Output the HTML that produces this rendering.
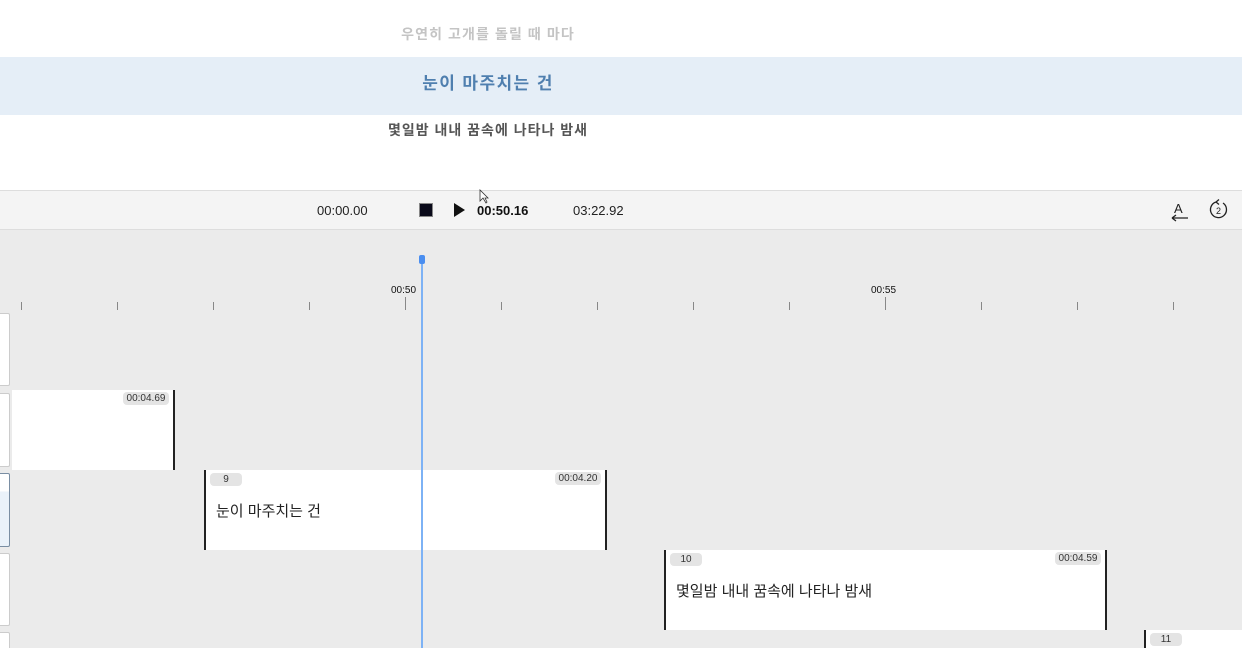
<!DOCTYPE html>
<html><head><meta charset="utf-8"><style>
*{margin:0;padding:0;box-sizing:border-box}
html,body{width:1242px;height:648px;overflow:hidden}
body{background:#ebebeb;font-family:"Liberation Sans","Noto Sans CJK KR",sans-serif;position:relative}
.abs{position:absolute}
.lyr{position:absolute;left:-133px;width:1242px;text-align:center;font-weight:bold;font-family:"Liberation Sans","Noto Sans CJK KR",sans-serif}
.tick{position:absolute;width:1px;background:#888;top:302px;height:8px}
.clip{position:absolute;background:#fff;height:80px}
.lb{position:absolute;top:0;bottom:0;width:2px;background:#222;left:0}
.rb{position:absolute;top:0;bottom:0;width:2px;background:#222;right:0}
.tag{position:absolute;background:#e4e4e4;border-radius:4px;font-size:10px;color:#333;height:13px;line-height:13px;text-align:center}
.txt{position:absolute;left:12px;top:30px;font-size:15px;color:#222}
.side{position:absolute;left:-2px;width:12px;background:#fff;border:1px solid #ccc;border-radius:2px}
</style></head><body>
<div class="abs" style="left:0;top:0;width:1242px;height:190px;background:#fff"></div>
<div class="abs" style="left:0;top:57px;width:1242px;height:58px;background:#e5eef7"></div>
<div class="lyr" style="top:24px;font-size:14px;color:#c4c4c4;letter-spacing:1.1px">우연히 고개를 돌릴 때 마다</div>
<div class="lyr" style="top:69px;font-size:17px;color:#4f7faf;letter-spacing:1.4px">눈이 마주치는 건</div>
<div class="lyr" style="top:120px;font-size:14px;color:#555;letter-spacing:1px">몇일밤 내내 꿈속에 나타나 밤새</div>
<div class="abs" style="left:0;top:190px;width:1242px;height:40px;background:#f4f4f4;border-top:1px solid #ddd;border-bottom:1px solid #ddd"></div>
<div class="abs" style="left:317px;top:203px;font-size:13px;color:#222">00:00.00</div>
<div class="abs" style="left:419px;top:203px;width:14px;height:14px;background:#0a0a1a;border:1px solid #888"></div>
<svg class="abs" style="left:452px;top:202px" width="14" height="16"><path d="M2 1 L13 8 L2 15 Z" fill="#111"/></svg>
<div class="abs" style="left:477px;top:203px;font-size:13px;color:#111;font-weight:bold">00:50.16</div>
<div class="abs" style="left:573px;top:203px;font-size:13px;color:#222">03:22.92</div>
<svg class="abs" style="left:1168px;top:198px" width="24" height="24"><text x="6" y="15" font-size="13" font-family="Liberation Sans" fill="#222">A</text><path d="M4 20 H20 M4 20 L8 17 M4 20 L8 23" stroke="#222" stroke-width="1.3" fill="none"/></svg>
<svg class="abs" style="left:1207px;top:198px" width="24" height="24"><path d="M9 4 A8 8 0 1 0 16 5" stroke="#222" stroke-width="1.3" fill="none"/><path d="M9 4 L12 1.5 M9 4 L12 6.5" stroke="#222" stroke-width="1.3" fill="none"/><text x="9" y="16" font-size="9" font-family="Liberation Sans" fill="#222">2</text></svg>
<div class="abs" style="left:391px;top:285px;font-size:10px;color:#111">00:50</div>
<div class="abs" style="left:871px;top:285px;font-size:10px;color:#111">00:55</div>
<div class="tick" style="left:21px"></div><div class="tick" style="left:117px"></div><div class="tick" style="left:213px"></div><div class="tick" style="left:309px"></div><div class="tick" style="left:405px;top:297px;height:13px"></div><div class="tick" style="left:501px"></div><div class="tick" style="left:597px"></div><div class="tick" style="left:693px"></div><div class="tick" style="left:789px"></div><div class="tick" style="left:885px;top:297px;height:13px"></div><div class="tick" style="left:981px"></div><div class="tick" style="left:1077px"></div><div class="tick" style="left:1173px"></div>
<div class="side" style="top:313px;height:73px"></div>
<div class="side" style="top:393px;height:74px"></div>
<div class="side" style="top:473px;height:74px;border-color:#7a8ea3;background:linear-gradient(#fff 0,#fff 24%,#eaf2fa 24%)"></div>
<div class="side" style="top:553px;height:73px"></div>
<div class="side" style="top:632px;height:20px"></div>
<div class="clip" style="left:12px;top:390px;width:163px"><div class="rb"></div><div class="tag" style="right:6px;top:2px;width:46px">00:04.69</div></div>
<div class="clip" style="left:204px;top:470px;width:403px"><div class="lb"></div><div class="rb"></div><div class="tag" style="left:6px;top:3px;width:32px">9</div><div class="tag" style="right:6px;top:2px;width:46px">00:04.20</div><div class="txt">눈이 마주치는 건</div></div>
<div class="clip" style="left:664px;top:550px;width:443px"><div class="lb"></div><div class="rb"></div><div class="tag" style="left:6px;top:3px;width:32px">10</div><div class="tag" style="right:6px;top:2px;width:46px">00:04.59</div><div class="txt">몇일밤 내내 꿈속에 나타나 밤새</div></div>
<div class="clip" style="left:1144px;top:630px;width:98px;height:18px"><div class="lb"></div><div class="tag" style="left:6px;top:3px;width:32px">11</div></div>
<div class="abs" style="left:421px;top:258px;width:2px;height:390px;background:#7db2f5"></div>
<div class="abs" style="left:419px;top:255px;width:6px;height:9px;background:#4a8ef0;border-radius:2px"></div>
<svg class="abs" style="left:479px;top:189px" width="10" height="16"><path d="M1 1 L1 12 L4 9 L7 14 L8 13 L6 9 L9 9 Z" fill="#fff" stroke="#333" stroke-width="0.8"/></svg>
</body></html>
